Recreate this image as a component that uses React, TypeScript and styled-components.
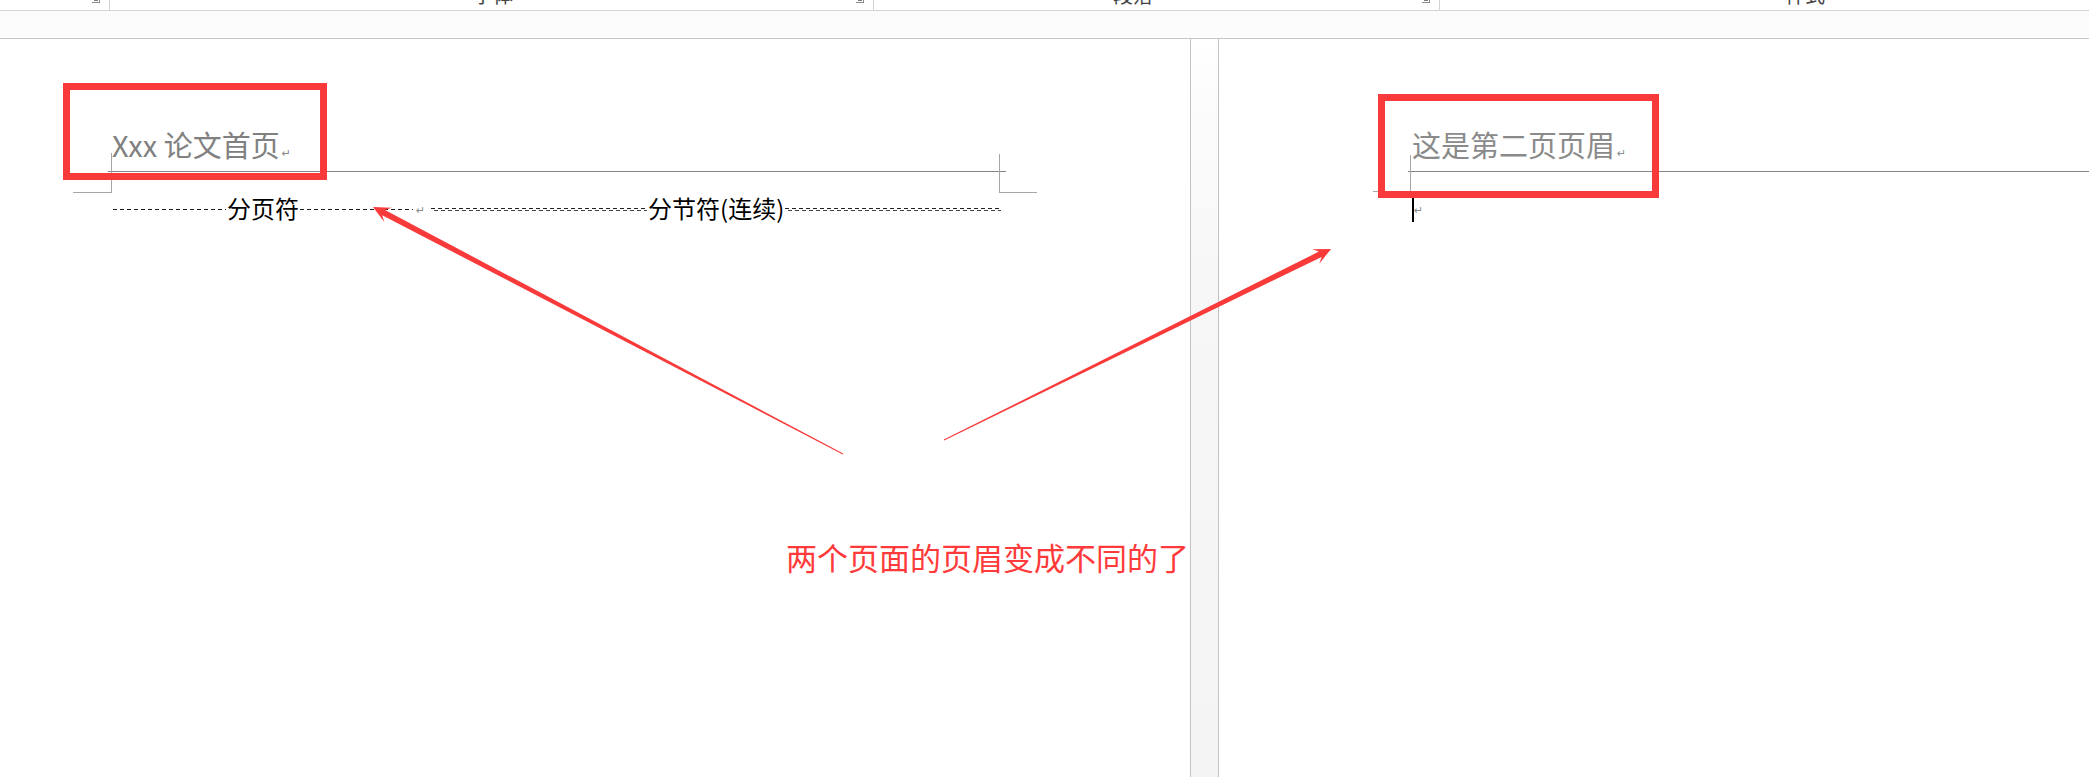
import React from "react";
import styled, { createGlobalStyle } from "styled-components";

const Global = createGlobalStyle`
  html, body { margin: 0; padding: 0; background: #ffffff; overflow: hidden; }
  body { font-family: "Noto Sans CJK SC", "Noto Sans", sans-serif; }
`;

const RED = "#f83a3a";
const CJK = `"Noto Sans CJK SC", "Noto Sans", sans-serif`;

const Screen = styled.div`
  position: relative;
  width: 2089px;
  height: 777px;
  overflow: hidden;
  background: #ffffff;
  display: flex;
  flex-direction: column;
`;

/* ---------- ribbon remains (group label bottoms) ---------- */
const RibbonStrip = styled.div`
  height: 10px;
  display: flex;
  overflow: hidden;
  background: #ffffff;
  border-bottom: 1px solid #d4d4d4;
  flex-shrink: 0;
`;

const RibbonGroup = styled.div<{ $w: number; $labelLeft: number }>`
  position: relative;
  width: ${(p) => p.$w}px;
  flex-shrink: 0;
  height: 10px;
  display: flex;
  padding-left: ${(p) => p.$labelLeft}px;
  box-sizing: border-box;
  border-right: 1px solid #d2d2d2;
`;

const RibbonLabel = styled.span`
  font-family: ${CJK};
  font-size: 20px;
  line-height: 20px;
  color: #454545;
  margin-top: -15px;
  white-space: nowrap;
`;

const Launcher = styled.span`
  position: absolute;
  right: 9px;
  top: -4px;
  width: 8px;
  height: 7px;
  border-right: 1px solid #8a8a8a;
  border-bottom: 1px solid #8a8a8a;
  box-sizing: border-box;
  &::after {
    content: "";
    position: absolute;
    right: 1px;
    bottom: 1px;
    width: 4px;
    height: 2px;
    background: #7a7a7a;
  }
`;

const RulerBar = styled.div`
  height: 27px;
  background: #fcfcfc;
  border-bottom: 1px solid #c6c6c6;
  flex-shrink: 0;
`;

/* ---------- document workspace ---------- */
const Workspace = styled.div`
  flex: 1;
  display: flex;
  min-height: 0;
`;

const Page = styled.div<{ $side: "left" | "right" }>`
  position: relative;
  background: #ffffff;
  padding-top: 91px;
  box-sizing: border-box;
  ${(p) =>
    p.$side === "left"
      ? `width: 1191px; flex-shrink: 0; border-right: 1px solid #c2c2c2;`
      : `flex: 1; border-left: 1px solid #c2c2c2;`}
`;

const PageGap = styled.div`
  width: 27px;
  flex-shrink: 0;
  background: linear-gradient(#ffffff 0%, #fbfbfb 10%, #f7f7f7 35%, #f4f4f4 100%);
`;

const HeaderArea = styled.div<{ $left: number; $width?: number }>`
  margin-left: ${(p) => p.$left}px;
  ${(p) => (p.$width ? `width: ${p.$width}px;` : "")}
  padding-left: 4px;
  padding-bottom: 12px;
  border-bottom: 1px solid #858585;
  display: flex;
  align-items: baseline;
`;

const HeaderText = styled.span<{ $tone: string }>`
  font-family: ${CJK};
  font-size: 29px;
  line-height: 29px;
  color: ${(p) => p.$tone};
  white-space: nowrap;
`;

const ReturnMark = styled.span`
  font-family: "DejaVu Sans", sans-serif;
  font-size: 11px;
  line-height: 11px;
  color: #8a8a8a;
  margin-left: 2px;
`;

/* crop marks at the corners of the text area */
const CornerMark = styled.div<{
  $l: number;
  $t: number;
  $w: number;
  $h: number;
  $edge: "left" | "right";
}>`
  position: absolute;
  left: ${(p) => p.$l}px;
  top: ${(p) => p.$t}px;
  width: ${(p) => p.$w}px;
  height: ${(p) => p.$h}px;
  box-sizing: border-box;
  border-bottom: 1px solid #a6a6a6;
  border-${(p) => (p.$edge === "left" ? "right" : "left")}: 1px solid #a6a6a6;
`;

const BreakRow = styled.div`
  margin-top: 24px;
  margin-left: 113px;
  height: 24px;
  display: flex;
  align-items: center;
`;

const BreakSegment = styled.div<{ $w: number }>`
  width: ${(p) => p.$w}px;
  display: flex;
  align-items: center;
  flex-shrink: 0;
`;

const PageDash = styled.div`
  flex: 1;
  height: 1px;
  margin-top: 3px;
  background: repeating-linear-gradient(
    to right,
    #1a1a1a 0 4px,
    transparent 4px 7px
  );
`;

const SectionDash = styled.div`
  flex: 1;
  height: 3px;
  margin-top: 3px;
  background-image: repeating-linear-gradient(
      to right,
      #222222 0 4px,
      transparent 4px 7px
    ),
    repeating-linear-gradient(
      to right,
      transparent 0 3px,
      #444444 3px 7px
    );
  background-size: 100% 1px, 100% 1px;
  background-position: 0 0, 0 2px;
  background-repeat: no-repeat;
`;

const BreakLabel = styled.span`
  font-family: ${CJK};
  font-size: 24px;
  line-height: 24px;
  color: #000000;
  white-space: nowrap;
  padding: 0 1px;
`;

const BreakReturn = styled(ReturnMark)`
  margin: 4px 6px 0 3px;
`;

const CursorLine = styled.div`
  margin-top: 26px;
  margin-left: 193px;
  display: flex;
  align-items: flex-start;
`;

const Caret = styled.div`
  width: 2px;
  height: 24px;
  background: #000000;
`;

const CaretReturn = styled(ReturnMark)`
  margin-left: 0px;
  margin-top: 7px;
`;

/* ---------- annotations on top of the screenshot ---------- */
const Overlay = styled.svg`
  position: absolute;
  left: 0;
  top: 0;
  width: 2089px;
  height: 777px;
  pointer-events: none;
`;

const HighlightBox = styled.div<{ $l: number; $t: number; $w: number; $h: number }>`
  position: absolute;
  left: ${(p) => p.$l}px;
  top: ${(p) => p.$t}px;
  width: ${(p) => p.$w}px;
  height: ${(p) => p.$h}px;
  box-sizing: border-box;
  border: 7px solid ${RED};
  pointer-events: none;
`;

const Caption = styled.div`
  position: absolute;
  left: 786px;
  top: 541px;
  font-family: ${CJK};
  font-size: 31px;
  line-height: 31px;
  color: #ff3a3a;
  white-space: nowrap;
`;

type Pt = [number, number];

function arrowPoints(tail: Pt, tip: Pt): string {
  const dx = tip[0] - tail[0];
  const dy = tip[1] - tail[1];
  const len = Math.hypot(dx, dy);
  const ux = dx / len;
  const uy = dy / len;
  const nx = -uy;
  const ny = ux;
  const at = (back: number, off: number): Pt => [
    tip[0] - ux * back + nx * off,
    tip[1] - uy * back + ny * off,
  ];
  const pts: Pt[] = [
    [tail[0] + nx * 0.4, tail[1] + ny * 0.4],
    at(12, 3),
    at(17, 8),
    tip,
    at(17, -8),
    at(12, -3),
    [tail[0] - nx * 0.4, tail[1] - ny * 0.4],
  ];
  return pts.map((p) => `${p[0].toFixed(1)},${p[1].toFixed(1)}`).join(" ");
}

const ribbonGroups = [
  { w: 110, labelLeft: 0, label: "" },
  { w: 764, labelLeft: 363, label: "字体" },
  { w: 566, labelLeft: 239, label: "段落" },
  { w: 700, labelLeft: 345, label: "样式" },
];

export default function App() {
  return (
    <>
      <Global />
      <Screen>
        <RibbonStrip>
          {ribbonGroups.map((g, i) => (
            <RibbonGroup key={i} $w={g.w} $labelLeft={g.labelLeft}>
              {g.label && <RibbonLabel>{g.label}</RibbonLabel>}
              {i < 3 && <Launcher />}
            </RibbonGroup>
          ))}
        </RibbonStrip>
        <RulerBar />
        <Workspace>
          <Page $side="left">
            <HeaderArea $left={108} $width={894}>
              <HeaderText $tone="#808080">Xxx 论文首页</HeaderText>
              <ReturnMark>↵</ReturnMark>
            </HeaderArea>
            <BreakRow>
              <BreakSegment $w={300}>
                <PageDash />
                <BreakLabel>分页符</BreakLabel>
                <PageDash />
              </BreakSegment>
              <BreakReturn>↵</BreakReturn>
              <BreakSegment $w={570}>
                <SectionDash />
                <BreakLabel>分节符(连续)</BreakLabel>
                <SectionDash />
              </BreakSegment>
            </BreakRow>
            <CornerMark $l={73} $t={114} $w={39} $h={40} $edge="left" />
            <CornerMark $l={999} $t={115} $w={38} $h={39} $edge="right" />
          </Page>
          <PageGap />
          <Page $side="right">
            <HeaderArea $left={189}>
              <HeaderText $tone="#8a8a8a">这是第二页页眉</HeaderText>
              <ReturnMark>↵</ReturnMark>
            </HeaderArea>
            <CursorLine>
              <Caret />
              <CaretReturn>↵</CaretReturn>
            </CursorLine>
            <CornerMark $l={154} $t={116} $w={38} $h={37} $edge="left" />
          </Page>
        </Workspace>

        <HighlightBox $l={63} $t={83} $w={264} $h={97} />
        <HighlightBox $l={1378} $t={94} $w={281} $h={104} />
        <Overlay viewBox="0 0 2089 777">
          <polygon points={arrowPoints([843, 454], [373, 207])} fill={RED} />
          <polygon points={arrowPoints([944, 440], [1331, 249])} fill={RED} />
        </Overlay>
        <Caption>两个页面的页眉变成不同的了</Caption>
      </Screen>
    </>
  );
}
